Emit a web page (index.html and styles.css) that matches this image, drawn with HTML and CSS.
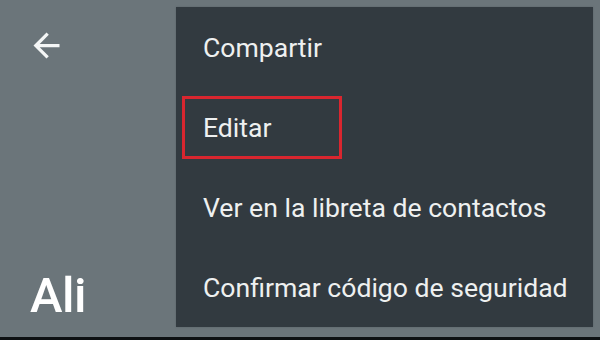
FILE: index.html
```html
<!DOCTYPE html>
<html lang="es">
<head>
<meta charset="utf-8">
<link rel="stylesheet" href="styles.css">
</head>
<body>
<div class="screen">
  <header class="appbar">
    <div class="back">
      <svg width="39" height="39" viewBox="0 0 24 24"><path fill="#f4f6f6" d="M20 11H7.83l5.59-5.59L12 4l-8 8 8 8 1.41-1.41L7.83 13H20v-2z"/></svg>
    </div>
    <h1 class="name">Ali</h1>
  </header>
  <ul class="menu">
    <li class="item">Compartir</li>
    <li class="item highlighted">Editar</li>
    <li class="item">Ver en la libreta de contactos</li>
    <li class="item">Confirmar código de seguridad</li>
  </ul>
</div>
<div class="navbar"></div>
</body>
</html>
```
FILE: styles.css
```css
html, body {
  margin: 0;
  padding: 0;
}
body {
  width: 600px;
  height: 340px;
  overflow: hidden;
  background: #0e1113;
  font-family: Roboto, "Noto Sans", sans-serif;
}
.screen {
  position: relative;
  height: 337px;
  background: #6b757a;
}
.appbar {
  height: 337px;
  display: flex;
  flex-direction: column;
  justify-content: space-between;
  padding: 26px 0 0 27px;
  box-sizing: border-box;
}
.back {
  width: 39px;
  height: 39px;
}
.back svg {
  display: block;
}
.name {
  margin: 0 0 13px 3px;
  color: #ffffff;
  font-size: 49px;
  font-weight: 500;
  letter-spacing: -0.5px;
  line-height: 56px;
}
.navbar {
  height: 3px;
  background: #0e1113;
}
.menu {
  position: absolute;
  left: 176px;
  top: 7px;
  width: 417px;
  margin: 0;
  padding: 0;
  list-style: none;
  background: #323a40;
  box-shadow: 0 0 2px rgba(0,0,0,0.15);
}
.item {
  position: relative;
  height: 80px;
  display: flex;
  align-items: center;
  padding-left: 27px;
  color: #eef0f0;
  font-size: 26.6px;
}
.highlighted::after {
  content: "";
  position: absolute;
  left: 6px;
  top: 9px;
  width: 160px;
  height: 63px;
  box-sizing: border-box;
  border: 3px solid #d9262f;
}
```
